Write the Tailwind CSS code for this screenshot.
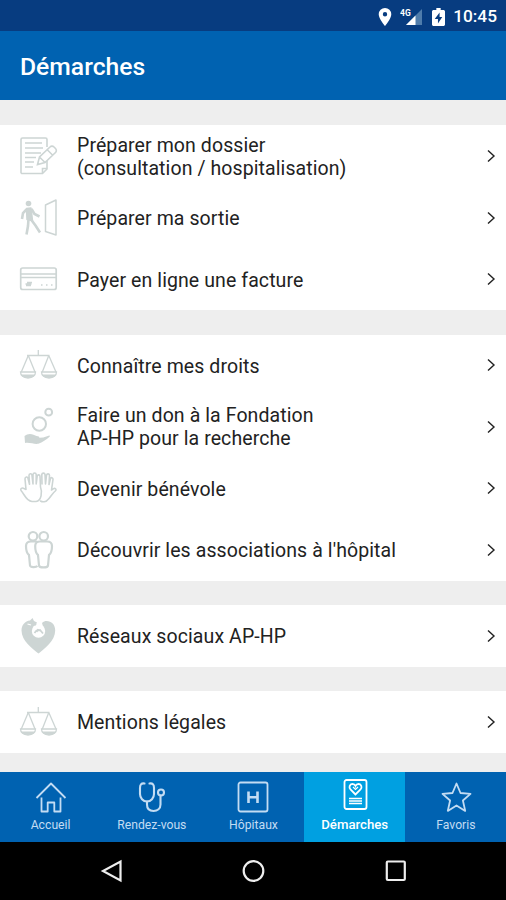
<!DOCTYPE html>
<html lang="fr">
<head>
    <meta charset="UTF-8">
    <meta name="viewport" content="width=device-width, initial-scale=1.0">
    <title>Démarches</title>

    <!-- Tailwind CSS -->
    <script src="https://cdn.jsdelivr.net/npm/@tailwindcss/browser@4"></script>

    <style>
        body { font-family: Roboto, 'Noto Sans', sans-serif; }
    </style>
</head>
<body class="bg-[#eeeeee]">

    <!-- Icônes réutilisées -->
    <svg class="hidden">
        <symbol id="chevron" viewBox="0 0 10 14">
            <path d="M2 1.500L8 7l-6 5.500" fill="none" stroke="currentColor" stroke-width="1.400" />
        </symbol>
        <symbol id="balance" viewBox="0 0 40 40">
            <g fill="none" stroke="currentColor" stroke-width="1.300">
                <path d="M20.300 5v5.500M9 10.500h22.500M10.300 10.500L3.300 27M10.300 10.500L17 27M30.800 10.500L24.300 27M30.800 10.500L38 27" />
                <path d="M2.500 27h15c0 3.500-3 6-7.500 6s-7.500-2.500-7.500-6zM23.500 27h15c0 3.500-3 6-7.500 6s-7.500-2.500-7.500-6z" />
            </g>
            <path d="M3 29.500h14c-1 2.500-3.500 3.500-7 3.500s-6-1-7-3.500zM24 29.500h14c-1 2.500-3.500 3.500-7 3.500s-6-1-7-3.500z" fill="currentColor" />
        </symbol>
    </svg>

    <div class="w-[506px] h-[900px] flex flex-col overflow-hidden">

        <!-- Barre d'état -->
        <div class="h-[31px] shrink-0 bg-[#073c80] flex items-center justify-end pr-[9px] pt-[2px] text-white">
            <svg class="w-[14px] h-[18px] mr-[8px]" viewBox="0 0 14 18">
                <path fill="currentColor" fill-rule="evenodd" d="M7 0a6.300 6.300 0 0 0-6.300 6.300C.7 11 7 18 7 18s6.300-7 6.300-11.700A6.300 6.300 0 0 0 7 0zm0 4a2.200 2.200 0 1 1 0 4.400A2.200 2.200 0 0 1 7 4z" />
            </svg>
            <svg class="w-[23px] h-[18px] mr-[9px]" viewBox="0 0 23 18">
                <path fill="#4f7cab" d="M22 1v16H6z" />
                <path fill="currentColor" d="M15.500 7.500V17H6z" />
                <text x="0" y="7.500" font-size="8.500" font-weight="700" fill="currentColor">4G</text>
            </svg>
            <svg class="w-[13px] h-[18px] mr-[8px]" viewBox="0 0 12 18" preserveAspectRatio="none">
                <path fill="currentColor" d="M4 0h4v2h2.500c.8 0 1.500.7 1.500 1.500v13c0 .8-.7 1.500-1.500 1.500h-9C.7 18 0 17.300 0 16.500v-13C0 2.700.7 2 1.500 2H4z" />
                <path fill="#073c80" d="M7 4.500L2.500 11h3v4.500L9.500 9H7z" />
            </svg>
            <span class="text-[17.300px] font-medium leading-none">10:45</span>
        </div>

        <header class="h-[69px] shrink-0 bg-[#0062b1] flex items-center pl-5 pt-[4px]">
            <h1 class="text-[24.700px] font-medium text-white leading-none">Démarches</h1>
        </header>

        <!-- Liste des démarches -->
        <main class="h-[672px] shrink-0 pt-[25px] flex flex-col gap-[24.600px] text-[19.500px] leading-[23px] tracking-[0.090px] text-[#222222]">
            <section class="bg-white">
                <a class="h-[61.700px] flex items-center pl-[18px] pr-[10px]">
                    <svg class="w-10 h-10 mr-[19px] text-[#cdd5d4]" viewBox="0 0 40 40" fill="none" stroke="currentColor" stroke-width="1.600">
                        <path d="M29 11V3.500a1.500 1.500 0 0 0-1.500-1.500h-23A1.500 1.500 0 0 0 3 3.500v32A1.500 1.500 0 0 0 4.500 37.500h20L29 33v-8" />
                        <path d="M24.500 37v-4.500H29" />
                        <path d="M7 7h17M7 12h18M7 17h16M7 21.500h11M7 26h9M7 31h8" />
                        <path d="M19.500 28.500l2-7.500L32 11a2.800 2.800 0 0 1 4 0l1.500 1.500a2.800 2.800 0 0 1 0 4L27 26.500zM21.500 21l5.500 5.500M29 13.500l5.500 5.500" />
                    </svg>
                    <span class="flex-1 pt-[2px]">Préparer mon dossier<br>(consultation / hospitalisation)</span>
                    <svg class="w-[10px] h-[14px]"><use href="#chevron" /></svg>
                </a>
                <a class="h-[61.700px] flex items-center pl-[18px] pr-[10px]">
                    <svg class="w-10 h-10 mr-[19px] text-[#cdd5d4]" viewBox="0 0 40 40" fill="none" stroke="currentColor" stroke-width="1.500">
                        <circle cx="10.500" cy="5.500" r="2.800" fill="currentColor" stroke="none" />
                        <path d="M8.500 10.500L13 10l1.500 12.500-5.500-1z" fill="currentColor" stroke-linejoin="round" />
                        <path d="M8.500 11.500L5 15 4 21M13.500 11l3 5 5 2.500M10.500 21l-.5 7L8.500 36.500M13 21.500l4.500 6L22 34.500" stroke-width="2.600" />
                        <path d="M38 2v35L27.500 33.500V7z" stroke-linejoin="round" />
                    </svg>
                    <span class="flex-1 pt-[2px]">Préparer ma sortie</span>
                    <svg class="w-[10px] h-[14px]"><use href="#chevron" /></svg>
                </a>
                <a class="h-[61.700px] flex items-center pl-[18px] pr-[10px]">
                    <svg class="w-10 h-10 mr-[19px] text-[#cdd5d4]" viewBox="0 0 40 40" fill="none" stroke="currentColor" stroke-width="1.700">
                        <rect x="2.700" y="9" width="35.500" height="21.500" rx="2" />
                        <path d="M3 15h35M3 18.500h35" />
                        <path d="M7.500 25h6M9 23.500h5M8 26.500h5M23 26h1.500M28 26h1.500M33 26h1.500" />
                    </svg>
                    <span class="flex-1 pt-[2px]">Payer en ligne une facture</span>
                    <svg class="w-[10px] h-[14px]"><use href="#chevron" /></svg>
                </a>
            </section>

            <section class="bg-white">
                <a class="h-[61.500px] flex items-center pl-[18px] pr-[10px]">
                    <svg class="w-10 h-10 mr-[19px] text-[#cdd5d4]"><use href="#balance" /></svg>
                    <span class="flex-1 pt-[2px]">Connaître mes droits</span>
                    <svg class="w-[10px] h-[14px]"><use href="#chevron" /></svg>
                </a>
                <a class="h-[61.500px] flex items-center pl-[18px] pr-[10px]">
                    <svg class="w-10 h-10 mr-[19px] text-[#cdd5d4]" viewBox="0 0 40 40" fill="none" stroke="currentColor" stroke-width="2">
                        <circle cx="21.300" cy="17" r="6.700" />
                        <circle cx="30.700" cy="5.200" r="3.400" />
                        <path stroke="none" fill="currentColor" d="M6.500 29c2.500-2.300 6-2.700 9-1.300l3 1.300c2 .2 3 .5 2.800 1.800l4-.3 6-2c.8 0 .8.8 0 1.400-3 2.400-6.800 5.600-11 6.900-4 .7-8.500-1.600-13.300-.8z" />
                    </svg>
                    <span class="flex-1 pt-[1px]">Faire un don à la Fondation<br>AP-HP pour la recherche</span>
                    <svg class="w-[10px] h-[14px]"><use href="#chevron" /></svg>
                </a>
                <a class="h-[61.500px] flex items-center pl-[18px] pr-[10px]">
                    <svg class="w-10 h-10 mr-[19px] text-[#cdd5d4]" viewBox="0 0 40 40" fill="none" stroke="currentColor" stroke-width="1.600" stroke-linejoin="round" stroke-linecap="round">
                        <path d="M14 33.500C8 33 7 27 3 22.500c-1-2 1-3.200 3-2l2 1L7 11c0-2.200 2.500-2.700 3-.7l1.500 6L11 7.500c0-2.200 2.700-2.400 3-.2L15 16V6.500c.3-2 3-2 3.200 0V16l1-8c.6-1.800 2.900-1.400 2.800.5L22.500 19c2 5 1 14-4.500 14.500z" />
                        <path d="M22.500 33c2 1.300 5.500 1 7-1 3.500-3 4-6 8.300-9.500.8-1.800-.8-2.700-2.600-1.600L33.500 22 35 11.500c.2-2-2-2.500-2.600-.7L31 16.500l.5-9c0-2-2.500-2.300-3-.3L27.500 16l-.5-9.500c-.3-1.800-2.900-1.800-3.200 0l.2 9.500" />
                    </svg>
                    <span class="flex-1 pt-[2px]">Devenir bénévole</span>
                    <svg class="w-[10px] h-[14px]"><use href="#chevron" /></svg>
                </a>
                <a class="h-[61.500px] flex items-center pl-[18px] pr-[10px]">
                    <svg class="w-10 h-10 mr-[19px] text-[#cdd5d4]" viewBox="0 0 40 40" fill="none" stroke="currentColor" stroke-width="2.200" stroke-linejoin="round">
                        <circle cx="15" cy="6.300" r="4.300" />
                        <circle cx="25.700" cy="6.300" r="4.300" />
                        <path d="M19.500 36c-1.500 1.500-7 1.500-7.500-.5L11 25c-2-1.500-3-5-3-9 0-3 2-4.500 5-4.500h6" />
                        <path d="M22 11.500h7c3.300 0 5 1.500 5 4.500 0 4-1 7.500-3 9l-1 10.500c-.3 2.500-8.700 2.500-9 0L20 25c-2-1.500-2.800-5-2.800-9 0-3 1.600-4.500 4.800-4.500z" />
                    </svg>
                    <span class="flex-1 pt-[2px]">Découvrir les associations à l'hôpital</span>
                    <svg class="w-[10px] h-[14px]"><use href="#chevron" /></svg>
                </a>
            </section>

            <section class="bg-white">
                <a class="h-[61.500px] flex items-center pl-[18px] pr-[10px]">
                    <svg class="w-10 h-10 mr-[19px] text-[#cdd5d4]" viewBox="0 0 40 40">
                        <path fill="currentColor" d="M20.500 37.500C15 33 3.500 25 3.500 14.500 3.500 9 7 5 12 4.500L14.500 2l1.500 3 3 1.500-2 4h8l-1-3.500C25.500 5.500 27 5 28.500 5c5 0 8.700 3.500 8.700 9.500C37.200 25 26 33 20.500 37.500z" />
                        <circle cx="20.500" cy="15" r="6.700" fill="#fff" />
                        <path d="M9.500 8l3.500 1" stroke="#fff" stroke-width="1.200" />
                        <path d="M13 5.500l5 3.500" stroke="currentColor" stroke-width="2" />
                        <path d="M16.500 17l2-2.500 3.500-.5 3 3.500M19 16l1-3" fill="none" stroke="currentColor" stroke-width="1.800" />
                    </svg>
                    <span class="flex-1 pt-[1px]">Réseaux sociaux AP-HP</span>
                    <svg class="w-[10px] h-[14px]"><use href="#chevron" /></svg>
                </a>
            </section>

            <section class="bg-white">
                <a class="h-[61.500px] flex items-center pl-[18px] pr-[10px]">
                    <svg class="w-10 h-10 mr-[19px] text-[#cdd5d4]"><use href="#balance" /></svg>
                    <span class="flex-1 pt-[1px]">Mentions légales</span>
                    <svg class="w-[10px] h-[14px]"><use href="#chevron" /></svg>
                </a>
            </section>
        </main>

        <!-- Onglets -->
        <nav class="h-[70px] shrink-0 bg-[#0062b1] grid grid-cols-5 text-[12.200px] leading-[14px] text-[#c3dcf3]">
            <a class="flex flex-col items-center pt-[9px]">
                <svg class="w-8 h-8 mb-[5px]" viewBox="0 0 32 32" fill="none" stroke="currentColor" stroke-width="1.800" stroke-linejoin="round">
                    <path d="M1.500 17L16 2.500 30.500 17M6.500 16.500V30.500h6.200v-9h6.600v9h6.200V16.500" />
                </svg>
                <span>Accueil</span>
            </a>
            <a class="flex flex-col items-center pt-[9px]">
                <svg class="w-8 h-8 mb-[5px]" viewBox="0 0 32 32" fill="none" stroke="currentColor" stroke-width="2.100" stroke-linecap="round">
                    <path d="M8.500 2.500C5 2 4 4 4 7v6c0 4 3 7.500 7 7.500s7-3.500 7-7.500V7c0-3-1-5-4.500-4.500" />
                    <path d="M11 20.500v3c0 4 2.500 6.500 6.500 6.500s7-2.500 7-6.500V14.500" />
                    <circle cx="25" cy="11.500" r="3" />
                </svg>
                <span>Rendez-vous</span>
            </a>
            <a class="flex flex-col items-center pt-[9px] pl-[1px]">
                <svg class="w-8 h-8 mb-[5px]" viewBox="0 0 32 32" fill="none" stroke="currentColor">
                    <rect x="1.500" y="1.500" width="29" height="29" rx="2" stroke-width="1.800" />
                    <path d="M11.500 10.500v11.500M20.500 10.500v11.500M11.500 16.200h9" stroke-width="2.600" />
                </svg>
                <span>Hôpitaux</span>
            </a>
            <a class="flex flex-col items-center pt-[6px] pl-[1px] bg-[#00a0e1] text-white font-medium text-[13.200px]">
                <svg class="w-8 h-8 mb-[8px]" viewBox="0 0 32 32" fill="none" stroke="currentColor" stroke-width="1.800">
                    <rect x="5.500" y="2" width="22" height="29" rx="2" />
                    <path d="M16.500 16.500l-5-5c-2-2.200-.8-5.500 1.800-5.500 1.500 0 2.700.8 3.200 2 .5-1.200 1.700-2 3.200-2 2.600 0 3.800 3.300 1.800 5.500z" />
                    <path d="M14 9l2.500 2.500L19 9" stroke-width="1.200" />
                    <path d="M10 20.500h13M10 23h13M10 25.500h13" stroke-width="1.400" />
                </svg>
                <span>Démarches</span>
            </a>
            <a class="flex flex-col items-center pt-[9px] pl-[1px]">
                <svg class="w-8 h-8 mb-[5px]" viewBox="0 0 32 32" fill="none" stroke="currentColor" stroke-width="1.800" stroke-linejoin="round">
                    <path d="M16.500 2.500l4 9.500 10 .9-7.600 6.600 2.300 10.400-8.700-5.400-8.700 5.400 2.300-10.400-7.600-6.600 10-.9z" />
                </svg>
                <span>Favoris</span>
            </a>
        </nav>

        <!-- Barre de navigation Android -->
        <div class="h-[58px] shrink-0 bg-black flex items-center justify-between pl-[100px] pr-[98px] text-[#eeeeee]">
            <svg class="w-6 h-6" viewBox="0 0 24 24" fill="none" stroke="currentColor" stroke-width="2.200">
                <path d="M20.500 2.500v19L3 12z" />
            </svg>
            <svg class="w-6 h-6" viewBox="0 0 24 24" fill="none" stroke="currentColor" stroke-width="2.200">
                <circle cx="11.500" cy="12" r="9.800" />
            </svg>
            <svg class="w-6 h-6" viewBox="0 0 24 24" fill="none" stroke="currentColor" stroke-width="2.200">
                <rect x="2.800" y="2.500" width="18" height="18.500" rx="1" />
            </svg>
        </div>
    </div>

</body>
</html>
